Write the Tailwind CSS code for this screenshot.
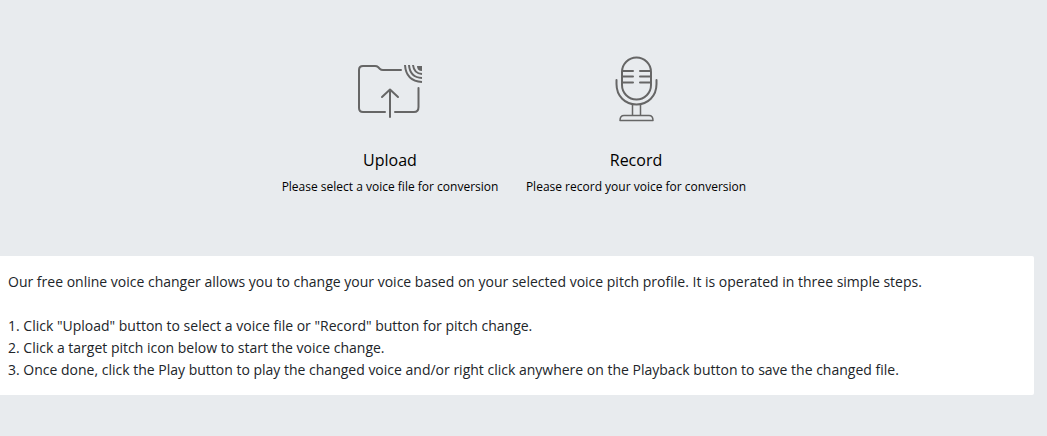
<!DOCTYPE html>
<html lang="en">
<head>
<meta charset="utf-8">
<meta name="viewport" content="width=device-width, initial-scale=1">
<title>Voice Changer</title>
<script src="https://cdn.jsdelivr.net/npm/@tailwindcss/browser@4"></script>
</head>
<body class="min-h-screen bg-[#e8ebee] pr-[13px] font-['Open_Sans',sans-serif] text-[#212529]">
<main>
  <section class="flex flex-wrap justify-center gap-8 pt-12 pr-2 pb-[59px] text-black">
    <button type="button" class="flex w-[214px] flex-col items-center whitespace-nowrap">
      <svg class="h-20 w-20" viewBox="350 48 80 80" fill="none" stroke="#666" stroke-width="2" stroke-linecap="round" stroke-linejoin="round" aria-hidden="true">
        <path d="M385 112H363Q359 112 359 108V70Q359 66 363 66H375Q377 66 378 67L380 69Q381 70 383 70H401M418.500 88V107Q418.500 112 414 112H395M390 117V90M382 97L390 89.500L398 97"/>
        <g stroke-linecap="butt"><path d="M405 65Q406 81 422 82M409 65Q410 77.500 422 78M413 65Q414 73.500 422 74"/></g>
        <path d="M417 66H422V71Q417 71 417 66Z" fill="#666" stroke="none"/>
      </svg>
      <span class="mt-5 text-base leading-6">Upload</span>
      <span class="mt-[5px] text-xs leading-5">Please select a voice file for conversion</span>
    </button>
    <button type="button" class="flex w-[214px] flex-col items-center whitespace-nowrap">
      <svg class="h-20 w-20" viewBox="596 48 80 80" fill="none" stroke="#666" stroke-width="2" stroke-linecap="round" stroke-linejoin="round" aria-hidden="true">
        <rect x="622" y="57.500" width="29" height="42" rx="14.500"/>
        <path d="M623 71H633M623 76.500H633M623 82.500H633M640 71H650M640 76.500H650M640 82.500H650"/>
        <path d="M616.500 80V84C616.500 96 625 104.500 636.500 104.500S656.500 96 656.500 84V80"/>
        <path stroke-width="1.500" d="M632.500 105V115M640.500 105V115M624 115.500H649Q653 115.500 653 120.500H620Q620 115.500 624 115.500Z"/>
      </svg>
      <span class="mt-5 text-base leading-6">Record</span>
      <span class="mt-[5px] text-xs leading-5">Please record your voice for conversion</span>
    </button>
  </section>
  <section class="rounded-r-xs bg-white px-2 pt-[15px] pb-[14px] text-sm leading-[22px]">
    <p>Our free online voice changer allows you to change your voice based on your selected voice pitch profile. It is operated in three simple steps.</p>
    <ol class="mt-[22px] list-inside">
      <li>1. Click "Upload" button to select a voice file or "Record" button for pitch change.</li>
      <li>2. Click a target pitch icon below to start the voice change.</li>
      <li>3. Once done, click the Play button to play the changed voice and/or right click anywhere on the Playback button to save the changed file.</li>
    </ol>
  </section>
</main>
</body>
</html>
